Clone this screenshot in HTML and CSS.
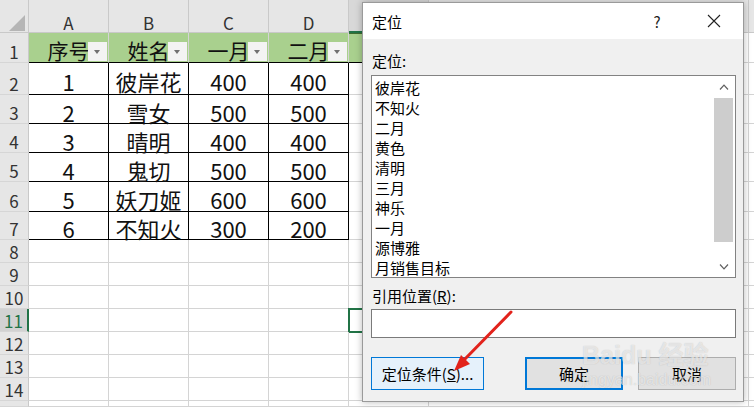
FILE: index.html
```html
<!DOCTYPE html>
<html lang="zh">

<head>
    <meta charset="UTF-8">
    <title>定位</title>
    <link rel="stylesheet" href="styles.css">
</head>

<body>

    <main class="sheet">
        <!-- kolonne-overskrifter -->
        <div class="ch corner">
            <svg width="29" height="33" viewBox="0 0 29 33"><polygon points="25,15 25,31 9,31" fill="#b5b5b5" /></svg>
        </div>
        <div class="ch">A</div>
        <div class="ch">B</div>
        <div class="ch">C</div>
        <div class="ch">D</div>
        <div class="ch sel"></div>
        <div class="ch"></div>
        <div class="ch"></div>

        <!-- række 1 -->
        <div class="rh">1</div>
        <div class="c hd">序号<span class="dd"></span></div>
        <div class="c hd">姓名<span class="dd"></span></div>
        <div class="c hd">一月<span class="dd"></span></div>
        <div class="c hd">二月<span class="dd"></span></div>
        <div class="c hd e1"></div>
        <div class="c"></div>
        <div class="c"></div>

        <div class="rh">2</div>
        <div class="c d">1</div>
        <div class="c d">彼岸花</div>
        <div class="c d">400</div>
        <div class="c d">400</div>
        <div class="c"></div>
        <div class="c"></div>
        <div class="c"></div>

        <div class="rh">3</div>
        <div class="c d">2</div>
        <div class="c d">雪女</div>
        <div class="c d">500</div>
        <div class="c d">500</div>
        <div class="c"></div>
        <div class="c"></div>
        <div class="c"></div>

        <div class="rh">4</div>
        <div class="c d">3</div>
        <div class="c d">晴明</div>
        <div class="c d">400</div>
        <div class="c d">400</div>
        <div class="c"></div>
        <div class="c"></div>
        <div class="c"></div>

        <div class="rh">5</div>
        <div class="c d">4</div>
        <div class="c d">鬼切</div>
        <div class="c d">500</div>
        <div class="c d">500</div>
        <div class="c"></div>
        <div class="c"></div>
        <div class="c"></div>

        <div class="rh">6</div>
        <div class="c d">5</div>
        <div class="c d">妖刀姬</div>
        <div class="c d">600</div>
        <div class="c d">600</div>
        <div class="c"></div>
        <div class="c"></div>
        <div class="c"></div>

        <div class="rh">7</div>
        <div class="c d">6</div>
        <div class="c d">不知火</div>
        <div class="c d">300</div>
        <div class="c d">200</div>
        <div class="c"></div>
        <div class="c"></div>
        <div class="c"></div>

        <!-- tomme rækker -->
        <div class="rh">8</div>
        <div class="c"></div><div class="c"></div><div class="c"></div><div class="c"></div><div class="c"></div><div class="c"></div><div class="c"></div>
        <div class="rh">9</div>
        <div class="c"></div><div class="c"></div><div class="c"></div><div class="c"></div><div class="c"></div><div class="c"></div><div class="c"></div>
        <div class="rh">10</div>
        <div class="c"></div><div class="c"></div><div class="c"></div><div class="c"></div><div class="c"></div><div class="c"></div><div class="c"></div>
        <div class="rh sel">11</div>
        <div class="c"></div><div class="c"></div><div class="c"></div><div class="c"></div><div class="c cur"></div><div class="c"></div><div class="c"></div>
        <div class="rh">12</div>
        <div class="c"></div><div class="c"></div><div class="c"></div><div class="c"></div><div class="c"></div><div class="c"></div><div class="c"></div>
        <div class="rh">13</div>
        <div class="c"></div><div class="c"></div><div class="c"></div><div class="c"></div><div class="c"></div><div class="c"></div><div class="c"></div>
        <div class="rh">14</div>
        <div class="c"></div><div class="c"></div><div class="c"></div><div class="c"></div><div class="c"></div><div class="c"></div><div class="c"></div>
        <div class="rh"></div>
        <div class="c"></div><div class="c"></div><div class="c"></div><div class="c"></div><div class="c"></div><div class="c"></div><div class="c"></div>
    </main>

    <section class="dlg">
        <div class="tbar">
            <span class="ttl">定位</span>
            <span class="help">?</span>
            <span class="close">
                <svg width="14" height="14" viewBox="0 0 14 14"><path d="M1 1 L13 13 M13 1 L1 13" stroke="#222" stroke-width="1.1" fill="none" /></svg>
            </span>
        </div>
        <div class="dbody">
            <div class="lbl">定位:</div>
            <div class="list">
                <ul class="items">
                    <li>彼岸花</li>
                    <li>不知火</li>
                    <li>二月</li>
                    <li>黄色</li>
                    <li>清明</li>
                    <li>三月</li>
                    <li>神乐</li>
                    <li>一月</li>
                    <li>源博雅</li>
                    <li>月销售目标</li>
                </ul>
                <div class="sbar">
                    <div class="arr up"><svg width="10" height="6" viewBox="0 0 10 6"><path d="M1 5.5 L5 1.2 L9 5.5" stroke="#606060" stroke-width="1.2" fill="none" /></svg></div>
                    <div class="thumb"></div>
                    <div class="track"></div>
                    <div class="arr down"><svg width="10" height="6" viewBox="0 0 10 6"><path d="M1 0.5 L5 4.8 L9 0.5" stroke="#606060" stroke-width="1.2" fill="none" /></svg></div>
                </div>
            </div>
            <div class="lbl ref">引用位置(<u>R</u>):</div>
            <div class="inp"></div>
            <div class="btns">
                <button class="btn hov">定位条件(<u>S</u>)...</button>
                <button class="btn def">确定</button>
                <button class="btn">取消</button>
            </div>
        </div>
    </section>

    <!-- vandmærke -->
    <div class="wm">
        <div class="wm-logo">Baidu 经验</div>
        <div class="wm-url">jingyan.baidu.com</div>
    </div>

    <!-- rød pil -->
    <svg class="pil" width="754" height="408" viewBox="0 0 754 408">
        <line x1="511" y1="312" x2="464" y2="360" stroke="#e2231c" stroke-width="3" stroke-linecap="round" />
        <polygon points="454,371 470,364 461,355" fill="#e2231c" />
    </svg>

</body>

</html>
```

FILE: styles.css
```css
* {
    box-sizing: border-box;
}

body {
    margin: 0;
    width: 754px;
    height: 408px;
    overflow: hidden;
    position: relative;
    background-color: #fff;
    font-family: "Noto Sans CJK SC", sans-serif;
}

.sheet {
    display: grid;
    grid-template-columns: 29px repeat(5, 80px) 320px 6px;
    grid-template-rows: 33px 30px 32px 29px 29px 29px 30px 28px repeat(7, 23px) 6px;
}

.ch,
.rh {
    background-color: #e6e6e6;
    border-right: 1px solid #c9c9c9;
    border-bottom: 1px solid #c9c9c9;
    display: flex;
    align-items: flex-end;
    justify-content: center;
    font-size: 17px;
    line-height: 1;
    color: #333;
    padding-bottom: 1px;
}

.rh {
    border-bottom-color: #d6d6d6;
    padding-bottom: 2px;
}

.corner {
    padding: 0;
    display: block;
}

.ch.sel {
    background-color: #d8d8d8;
    border-bottom: 2px solid #217346;
}

.rh.sel {
    background-color: #d2d2d2;
    border-right: 2px solid #217346;
    color: #217346;
}

.c {
    position: relative;
    border-right: 1px solid #d4d4d4;
    border-bottom: 1px solid #d4d4d4;
    display: flex;
    align-items: center;
    justify-content: center;
    padding-top: 5px;
    font-size: 22px;
    line-height: 1;
    color: #111;
}

.c.hd {
    background-color: #a9d08e;
    border-bottom-color: #000;
    font-size: 21px;
}

.c.e1 {
    border-top: 1px solid #3f6b2f;
}

.c.d {
    border-right-color: #000;
    border-bottom-color: #000;
}

.c.cur {
    outline: 2px solid #217346;
    outline-offset: -1px;
}

.dd {
    position: absolute;
    right: 1px;
    bottom: 1px;
    width: 19px;
    height: 19px;
    background-color: #f3f3f3;
}

.dd::after {
    content: "";
    position: absolute;
    left: 6px;
    top: 8px;
    border-left: 3.5px solid transparent;
    border-right: 3.5px solid transparent;
    border-top: 4px solid #707070;
}

/* dialog */
.dlg {
    position: absolute;
    left: 362px;
    top: 2px;
    width: 382px;
    height: 400px;
    border: 1px solid #9a9a9a;
    background-color: #f0f0f0;
    box-shadow: 0 0 7px rgba(0, 0, 0, 0.28);
    font-size: 15px;
    color: #000;
}

.tbar {
    height: 36px;
    background-color: #fff;
    display: flex;
    align-items: center;
    padding-left: 9px;
}

.ttl {
    flex: 1;
}

.help {
    width: 10px;
    text-align: center;
    margin-right: 45px;
    color: #222;
}

.close {
    width: 14px;
    height: 14px;
    margin-right: 22px;
    display: flex;
}

.dbody {
    padding: 12px 7px 0 8px;
}

.lbl {
    line-height: 20px;
    height: 20px;
    padding-left: 1px;
}

.list {
    margin-top: 4px;
    height: 203px;
    border: 1px solid #828282;
    background-color: #fff;
    display: flex;
}

.items {
    flex: 1;
    list-style: none;
    margin: 0;
    padding: 2px 0 0 3px;
    line-height: 20px;
}

.sbar {
    width: 19px;
    margin-right: 2px;
    display: flex;
    flex-direction: column;
}

.arr {
    display: flex;
    align-items: center;
    justify-content: center;
}

.arr.up {
    height: 22px;
}

.arr.down {
    height: 21px;
}

.thumb {
    height: 144px;
    background-color: #cdcdcd;
}

.track {
    flex: 1;
}

.lbl.ref {
    margin-top: 8px;
}

.inp {
    margin-top: 3px;
    height: 29px;
    border: 1px solid #7a7a7a;
    background-color: #fff;
}

.btns {
    margin-top: 19px;
    display: flex;
}

.btn {
    height: 33px;
    width: 98px;
    border: 1px solid #adadad;
    background-color: #e1e1e1;
    font-family: "Noto Sans CJK SC", sans-serif;
    font-size: 15px;
    color: #000;
    padding: 0;
}

.btn.hov {
    width: 113px;
    background-color: #e5f1fb;
    border-color: #0078d7;
    margin-right: auto;
}

.btn.def {
    border: 2px solid #0078d7;
    margin-right: 15px;
}

/* vandmærke */
.wm {
    position: absolute;
    left: 582px;
    top: 340px;
    width: 130px;
    color: rgba(255, 255, 255, 0.6);
    text-shadow: 0 0 1px rgba(110, 110, 110, 0.4);
    font-family: "Liberation Sans", "Noto Sans CJK SC", sans-serif;
    pointer-events: none;
    white-space: nowrap;
}

.wm-logo {
    font-size: 25px;
    font-weight: bold;
    line-height: 30px;
}

.wm-url {
    font-size: 16px;
    line-height: 20px;
}

.pil {
    position: absolute;
    left: 0;
    top: 0;
    pointer-events: none;
}
```
